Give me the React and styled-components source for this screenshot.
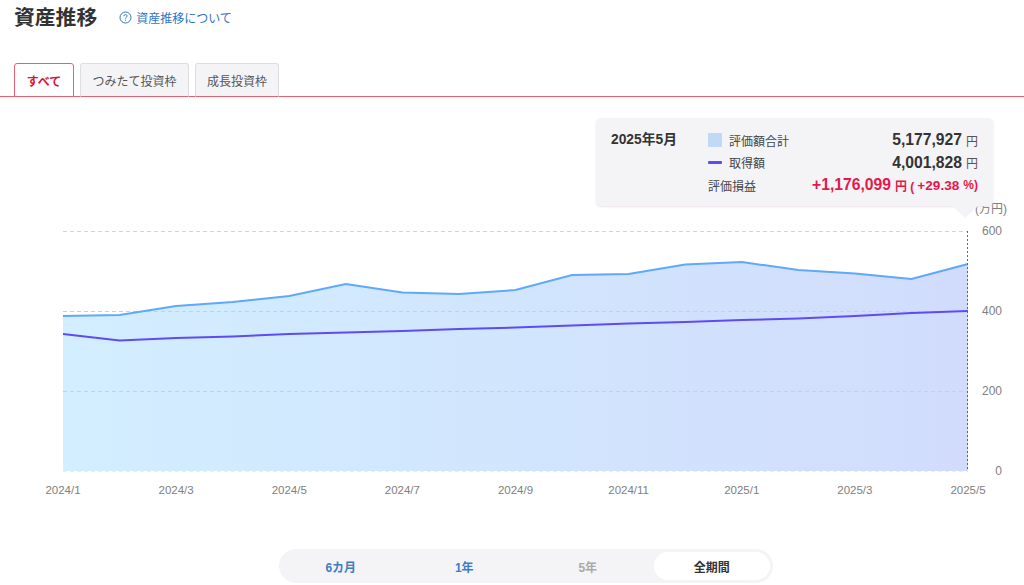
import React from "react";
import styled, { createGlobalStyle } from "styled-components";

const GlobalStyle = createGlobalStyle`
  html, body {
    margin: 0;
    padding: 0;
    background: #fff;
    overflow: hidden;
    font-family: "Liberation Sans", "Noto Sans CJK JP", sans-serif;
    color: #333;
  }
`;

const Page = styled.div`
  width: 1024px;
  height: 585px;
  overflow: hidden;
`;

const Header = styled.div`
  display: flex;
  align-items: center;
  height: 36px;
  padding-left: 14px;
`;

const Title = styled.h1`
  margin: 0 22px 0 0;
  font-size: 20.8px;
  line-height: 36px;
  font-weight: 700;
  color: #333;
`;

const HelpLink = styled.a`
  display: flex;
  align-items: center;
  gap: 4px;
  font-size: 12px;
  color: #2f74c0;
  text-decoration: none;
  margin-bottom: 1px;
`;

const Tabs = styled.div`
  display: flex;
  align-items: flex-end;
  gap: 6px;
  height: 33px;
  margin-top: 27px;
  padding-left: 14px;
  border-bottom: 1px solid #e8606e;
`;

const Tab = styled.div`
  box-sizing: border-box;
  display: flex;
  align-items: center;
  justify-content: center;
  width: ${(p) => p.$width}px;
  height: 34px;
  margin-bottom: -1px;
  font-size: 12px;
  font-weight: ${(p) => (p.$active ? 700 : 400)};
  color: ${(p) => (p.$active ? "#d9143c" : "#555")};
  background: ${(p) => (p.$active ? "#fff" : "#f4f4f7")};
  border: 1px solid ${(p) => (p.$active ? "#e8606e" : "#dedee0")};
  border-bottom-color: #e8606e;
  border-radius: 3px 3px 0 0;
`;

const ChartArea = styled.div`
  position: relative;
  height: 432px;
`;

const ChartSvg = styled.svg`
  display: block;
  width: 1024px;
  height: 432px;
`;

const Tooltip = styled.div`
  position: absolute;
  left: 596px;
  top: 21px;
  box-sizing: border-box;
  width: 397px;
  height: 88px;
  padding: 12px 15px 0;
  display: grid;
  grid-template-columns: 97px 1fr;
  background: #f4f4f7;
  border-radius: 5px;
  box-shadow: 0 1px 2px rgba(220, 200, 205, 0.5);

  &::after {
    content: "";
    position: absolute;
    left: 356px;
    bottom: -12px;
    border-left: 13px solid transparent;
    border-right: 13px solid transparent;
    border-top: 12px solid #f4f4f7;
  }
`;

const TooltipDate = styled.div`
  font-size: 13.8px;
  font-weight: 700;
  line-height: 19px;
  color: #333;
`;

const TooltipRows = styled.div`
  display: flex;
  flex-direction: column;
  gap: 2px;
`;

const TooltipRow = styled.div`
  display: flex;
  align-items: center;
  height: 20.5px;
  font-size: 12px;
  color: #444;
`;

const Swatch = styled.span`
  width: 14px;
  height: 14px;
  margin-right: 7px;
  background: #c0daf6;
`;

const LineKey = styled.span`
  width: 14px;
  height: 3px;
  margin-right: 7px;
  background: #5f4bf5;
  border-radius: 1px;
`;

const Amount = styled.span`
  margin-left: auto;
  font-size: 15.7px;
  font-weight: 700;
  color: ${(p) => p.$color || "#333"};
`;

const Unit = styled.span`
  margin-left: 4px;
  font-size: 12px;
  font-weight: ${(p) => (p.$bold ? 700 : 400)};
  color: ${(p) => p.$color || "#555"};
`;

const Percent = styled.span`
  margin-left: 3px;
  font-size: 13.6px;
  font-weight: 700;
  color: #e8174a;
`;

const RangeBar = styled.div`
  box-sizing: border-box;
  display: grid;
  grid-template-columns: repeat(4, 1fr);
  align-items: center;
  width: 494px;
  height: 34px;
  margin: 20px 0 0 279px;
  background: #f4f4f7;
  border-radius: 17px;
`;

const RangeItem = styled.div`
  display: flex;
  align-items: center;
  justify-content: center;
  height: 28px;
  margin: ${(p) => (p.$active ? "0 3px 0 4px" : "0")};
  font-size: 12px;
  font-weight: 700;
  color: ${(p) => (p.$disabled ? "#aaa" : p.$active ? "#333" : "#3f7cc4")};
  background: ${(p) => (p.$active ? "#fff" : "transparent")};
  border-radius: 14px;
`;

const TOP = 97;
const x = (i) => 63 + i * (905 / 16);
const y = (py) => py - TOP;

const totals = [316, 315, 306, 302, 296, 284, 292.5, 294, 290, 275, 274, 264.5, 262, 270, 273.5, 279, 264];
const costs = [334, 340.5, 338, 336.5, 334, 332.5, 331, 329, 327.5, 325.5, 323.5, 322, 320, 318.5, 316, 313, 311];

const toPoints = (values) => values.map((v, i) => `${x(i).toFixed(1)},${y(v)}`).join(" ");

const xLabels = ["2024/1", "2024/3", "2024/5", "2024/7", "2024/9", "2024/11", "2025/1", "2025/3", "2025/5"];
const grid = [
  { py: 231, label: "600" },
  { py: 311, label: "400" },
  { py: 391, label: "200" },
  { py: 471, label: "0" },
];

const HelpIcon = () => (
  <svg width="13" height="13" viewBox="0 0 13 13" fill="none" stroke="#2f74c0" strokeWidth="1">
    <circle cx="6.5" cy="6.5" r="5.5" />
    <path d="M4.9 5.2c0-1 .7-1.6 1.6-1.6s1.6.6 1.6 1.4c0 1.2-1.6 1.3-1.6 2.5" />
    <path d="M6.5 8.7v1" />
  </svg>
);

const Chart = () => (
  <ChartSvg viewBox="0 0 1024 432">
    <defs>
      <linearGradient id="area" x1="0" y1="0" x2="1" y2="0">
        <stop offset="0" stopColor="#d2eeff" />
        <stop offset="1" stopColor="#d1dcfc" />
      </linearGradient>
    </defs>
    {grid.slice(0, 2).map((g) => (
      <line key={g.py} x1="63" x2="968" y1={y(g.py) + 0.5} y2={y(g.py) + 0.5} stroke="#d4d4d4" strokeDasharray="4 3" />
    ))}
    <polygon points={`63,${y(471)} ${toPoints(totals)} 968,${y(471)}`} fill="url(#area)" />
    {grid.slice(1).map((g) => (
      <line
        key={g.py}
        x1="63"
        x2="968"
        y1={y(g.py) + 0.5}
        y2={y(g.py) + 0.5}
        stroke={g.py === 471 ? "#e4effb" : "#c8d0dc"}
        strokeDasharray="4 3"
      />
    ))}
    <polyline points={toPoints(totals)} fill="none" stroke="#5ea9fb" strokeWidth="2" />
    <polyline points={toPoints(costs)} fill="none" stroke="#5f4bf5" strokeWidth="2" />
    <line x1="967.5" x2="967.5" y1={y(231)} y2={y(471)} stroke="#2f6fc0" strokeDasharray="2 2" />
    <text x="1007" y={y(213)} textAnchor="end" fontSize="12" fill="#808080">(万円)</text>
    {grid.map((g) => (
      <text key={g.label} x="1002" y={y(g.py) + 4} textAnchor="end" fontSize="12" fill="#808080">
        {g.label}
      </text>
    ))}
    {xLabels.map((label, i) => (
      <text key={label} x={x(i * 2)} y={y(494)} textAnchor="middle" fontSize="11.5" fill="#808080">
        {label}
      </text>
    ))}
  </ChartSvg>
);

export default function App() {
  return (
    <Page>
      <GlobalStyle />
      <Header>
        <Title>資産推移</Title>
        <HelpLink>
          <HelpIcon />
          資産推移について
        </HelpLink>
      </Header>
      <Tabs>
        <Tab $active $width={60}>すべて</Tab>
        <Tab $width={109}>つみたて投資枠</Tab>
        <Tab $width={84}>成長投資枠</Tab>
      </Tabs>
      <ChartArea>
        <Chart />
        <Tooltip>
          <TooltipDate>2025年5月</TooltipDate>
          <TooltipRows>
            <TooltipRow>
              <Swatch />
              評価額合計
              <Amount>5,177,927</Amount>
              <Unit>円</Unit>
            </TooltipRow>
            <TooltipRow>
              <LineKey />
              取得額
              <Amount>4,001,828</Amount>
              <Unit>円</Unit>
            </TooltipRow>
            <TooltipRow>
              評価損益
              <Amount $color="#e8174a">+1,176,099</Amount>
              <Unit $bold $color="#e8174a">円 (</Unit>
              <Percent>+29.38</Percent>
              <Unit $bold $color="#e8174a">%)</Unit>
            </TooltipRow>
          </TooltipRows>
        </Tooltip>
      </ChartArea>
      <RangeBar>
        <RangeItem>6カ月</RangeItem>
        <RangeItem>1年</RangeItem>
        <RangeItem $disabled>5年</RangeItem>
        <RangeItem $active>全期間</RangeItem>
      </RangeBar>
    </Page>
  );
}
